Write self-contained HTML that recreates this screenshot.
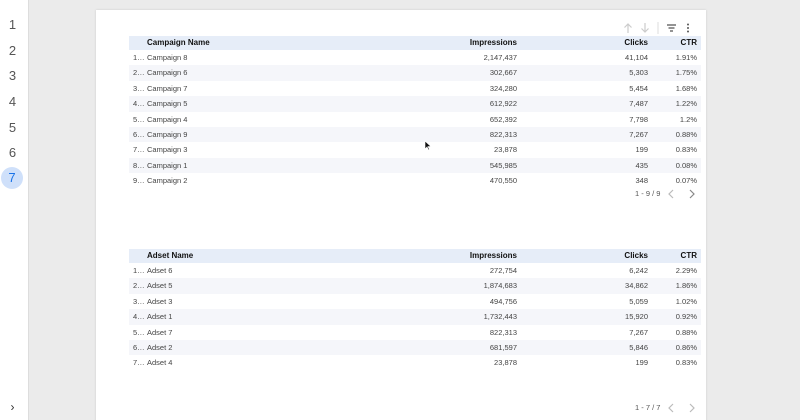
<!DOCTYPE html><html><head><style>
html,body{margin:0;width:800px;height:420px;overflow:hidden}
body{background:#ebebeb;font-family:"Liberation Sans",Arial,sans-serif;position:relative}
.side{position:absolute;left:0;top:0;width:28px;height:420px;background:#fff;border-right:1px solid #ddd}
.side div{position:absolute;left:0;width:25px;text-align:center;font-size:13px;color:#555}
.sel{background:#cfe0fa;border-radius:50%;width:22px!important;height:22px;left:1px!important;line-height:22px;color:#1a73e8!important}
.card{position:absolute;left:96px;top:10px;width:610px;height:420px;background:#fff;box-shadow:0 0 2px rgba(0,0,0,.15)}
.t{position:absolute;left:129px;width:572px;font-size:7.5px;color:#444}
.r{position:relative;height:15.4px;line-height:15.4px}
.r:nth-child(odd){background:#f5f6fa}
.h{background:#e6edf8!important;height:14px;line-height:14px;font-weight:bold;color:#111;font-size:8px}
.r span{position:absolute}
.i{left:4px}.n{left:18px}.im{right:184px}.c{right:53px}.ct{right:4px}
.pg{position:absolute;font-size:7.5px;color:#555}
</style></head><body>
<div class="side">
<div style="top:17px">1</div><div style="top:43px">2</div><div style="top:68px">3</div><div style="top:94px">4</div><div style="top:120px">5</div><div style="top:145px">6</div><div class="sel" style="top:167px">7</div>
<div style="top:400px;font-size:12px;color:#333">›</div>
</div>
<div class="card"></div>
<svg style="position:absolute;left:620px;top:20px" width="80" height="16">
<path d="M8 4v9M4.5 7.5L8 4l3.5 3.5" stroke="#ccc" stroke-width="1.2" fill="none"/>
<path d="M25 3v9M21.5 8.5L25 12l3.5-3.5" stroke="#ccc" stroke-width="1.2" fill="none"/>
<line x1="38" y1="2" x2="38" y2="14" stroke="#ddd"/>
<path d="M47 5h9M48.5 8h6M50 11h3" stroke="#555" stroke-width="1.2"/>
<circle cx="68" cy="4.5" r="1" fill="#555"/><circle cx="68" cy="8" r="1" fill="#555"/><circle cx="68" cy="11.5" r="1" fill="#555"/>
</svg>
<div class="t" style="top:36px">
<div class="r h"><span class="n">Campaign Name</span><span class="im">Impressions</span><span class="c">Clicks</span><span class="ct">CTR</span></div>
<div class="r"><span class="i">1…</span><span class="n">Campaign 8</span><span class="im">2,147,437</span><span class="c">41,104</span><span class="ct">1.91%</span></div>
<div class="r"><span class="i">2…</span><span class="n">Campaign 6</span><span class="im">302,667</span><span class="c">5,303</span><span class="ct">1.75%</span></div>
<div class="r"><span class="i">3…</span><span class="n">Campaign 7</span><span class="im">324,280</span><span class="c">5,454</span><span class="ct">1.68%</span></div>
<div class="r"><span class="i">4…</span><span class="n">Campaign 5</span><span class="im">612,922</span><span class="c">7,487</span><span class="ct">1.22%</span></div>
<div class="r"><span class="i">5…</span><span class="n">Campaign 4</span><span class="im">652,392</span><span class="c">7,798</span><span class="ct">1.2%</span></div>
<div class="r"><span class="i">6…</span><span class="n">Campaign 9</span><span class="im">822,313</span><span class="c">7,267</span><span class="ct">0.88%</span></div>
<div class="r"><span class="i">7…</span><span class="n">Campaign 3</span><span class="im">23,878</span><span class="c">199</span><span class="ct">0.83%</span></div>
<div class="r"><span class="i">8…</span><span class="n">Campaign 1</span><span class="im">545,985</span><span class="c">435</span><span class="ct">0.08%</span></div>
<div class="r"><span class="i">9…</span><span class="n">Campaign 2</span><span class="im">470,550</span><span class="c">348</span><span class="ct">0.07%</span></div>
</div>
<div class="pg" style="left:635px;top:189px">1 - 9 / 9</div>
<svg style="position:absolute;left:666px;top:188px" width="32" height="12"><path d="M7 2L3 6l4 4" stroke="#bbb" stroke-width="1.2" fill="none"/><path d="M24 2l4 4-4 4" stroke="#888" stroke-width="1.2" fill="none"/></svg>
<div class="t" style="top:249px">
<div class="r h"><span class="n">Adset Name</span><span class="im">Impressions</span><span class="c">Clicks</span><span class="ct">CTR</span></div>
<div class="r"><span class="i">1…</span><span class="n">Adset 6</span><span class="im">272,754</span><span class="c">6,242</span><span class="ct">2.29%</span></div>
<div class="r"><span class="i">2…</span><span class="n">Adset 5</span><span class="im">1,874,683</span><span class="c">34,862</span><span class="ct">1.86%</span></div>
<div class="r"><span class="i">3…</span><span class="n">Adset 3</span><span class="im">494,756</span><span class="c">5,059</span><span class="ct">1.02%</span></div>
<div class="r"><span class="i">4…</span><span class="n">Adset 1</span><span class="im">1,732,443</span><span class="c">15,920</span><span class="ct">0.92%</span></div>
<div class="r"><span class="i">5…</span><span class="n">Adset 7</span><span class="im">822,313</span><span class="c">7,267</span><span class="ct">0.88%</span></div>
<div class="r"><span class="i">6…</span><span class="n">Adset 2</span><span class="im">681,597</span><span class="c">5,846</span><span class="ct">0.86%</span></div>
<div class="r"><span class="i">7…</span><span class="n">Adset 4</span><span class="im">23,878</span><span class="c">199</span><span class="ct">0.83%</span></div>
</div>
<div class="pg" style="left:635px;top:403px">1 - 7 / 7</div>
<svg style="position:absolute;left:666px;top:402px" width="32" height="12"><path d="M7 2L3 6l4 4" stroke="#bbb" stroke-width="1.2" fill="none"/><path d="M24 2l4 4-4 4" stroke="#bbb" stroke-width="1.2" fill="none"/></svg>
<svg style="position:absolute;left:424px;top:140px" width="8" height="11"><path d="M1 1v8l2-2 1.5 3 1-.5-1.5-3h3z" fill="#111" stroke="#fff" stroke-width=".6"/></svg>
</body></html>
